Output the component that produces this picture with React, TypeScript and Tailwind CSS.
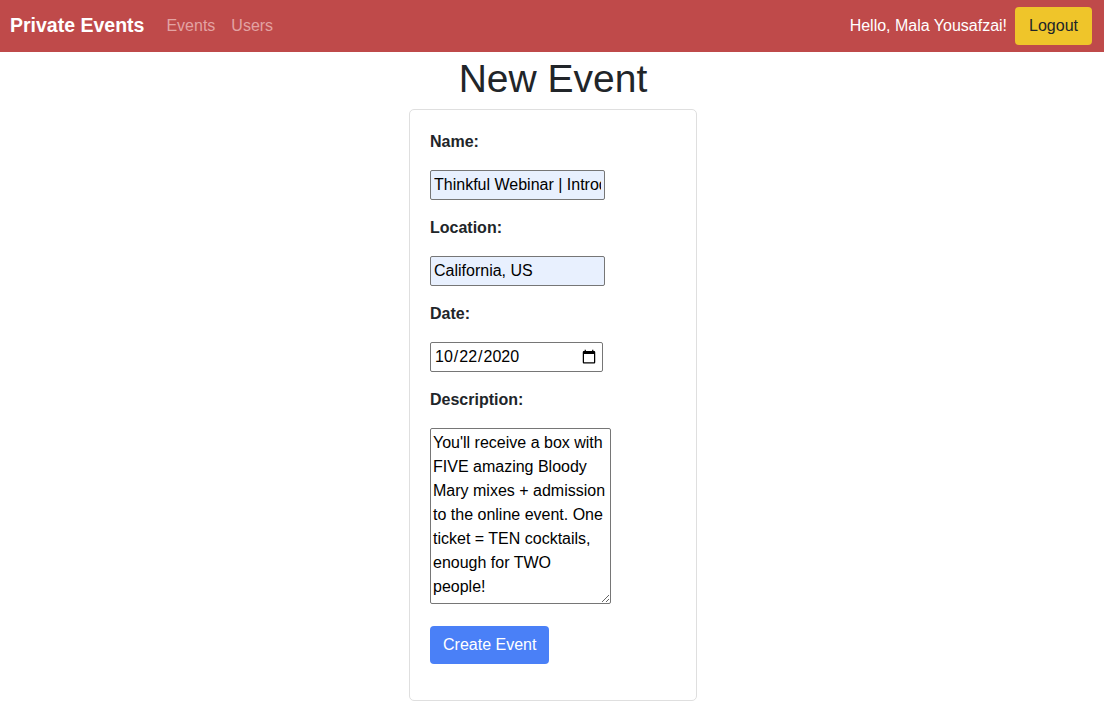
import React from 'react';

const description =
  "You'll receive a box with FIVE amazing Bloody Mary mixes + admission to the online event. One ticket = TEN cocktails, enough for TWO people!";

const Field: React.FC<{ label: string; children: React.ReactNode }> = ({ label, children }) => (
  <div className="flex flex-col gap-4">
    <label className="font-bold leading-6 text-[#212529]">{label}</label>
    <div className="flex">{children}</div>
  </div>
);

export default function App() {
  return (
    <div className="min-h-[710px] bg-white text-[16px] text-[#212529] font-['Liberation_Sans',Arial,sans-serif]">
      <nav className="h-[52px] bg-[#bf4a4a] flex items-center justify-between pl-[10px] pr-[12px]">
        <div className="flex items-center">
          <a className="text-[19.5px] font-bold text-white mr-[22px]">Private Events</a>
          <a className="text-[#e3a3a3] mr-[16px]">Events</a>
          <a className="text-[#e3a3a3]">Users</a>
        </div>
        <div className="flex items-center gap-2">
          <span className="text-white">Hello, Mala Yousafzai!</span>
          <button className="h-[38px] px-[14px] rounded bg-[#efc52a] text-[#212529]">Logout</button>
        </div>
      </nav>

      <h1 className="mt-[3px] mb-[6px] text-center text-[39px] leading-[48px] font-medium text-[#212529] pl-[2px]">
        New Event
      </h1>

      <div className="flex justify-center pl-[2px]">
        <div className="w-[288px] border border-[#dfdfdf] rounded-[5px] px-5 pt-5 pb-[36px]">
          <form className="flex flex-col gap-4" onSubmit={e => e.preventDefault()}>
            <Field label="Name:">
              <input
                type="text"
                defaultValue="Thinkful Webinar | Introduction to Data Science"
                className="w-[175px] h-[30px] px-[3px] border border-[#767676] rounded-[2px] bg-[#e8f0fe] text-black outline-none"
              />
            </Field>
            <Field label="Location:">
              <input
                type="text"
                defaultValue="California, US"
                className="w-[175px] h-[30px] px-[3px] border border-[#767676] rounded-[2px] bg-[#e8f0fe] text-black outline-none"
              />
            </Field>
            <Field label="Date:">
              <input
                type="date"
                defaultValue="2020-10-22"
                className="w-[173px] h-[30px] px-[3px] border border-[#767676] rounded-[2px] bg-white text-black outline-none"
              />
            </Field>
            <Field label="Description:">
              <textarea
                defaultValue={description}
                className="w-[181px] h-[176px] pl-[2px] pr-[3px] py-[2px] border border-[#767676] rounded-[2px] bg-white text-black leading-6 outline-none"
              />
            </Field>
            <div className="mt-[6px]">
              <button className="h-[38px] px-[13px] rounded bg-[#4a80f7] text-white">Create Event</button>
            </div>
          </form>
        </div>
      </div>
    </div>
  );
}
